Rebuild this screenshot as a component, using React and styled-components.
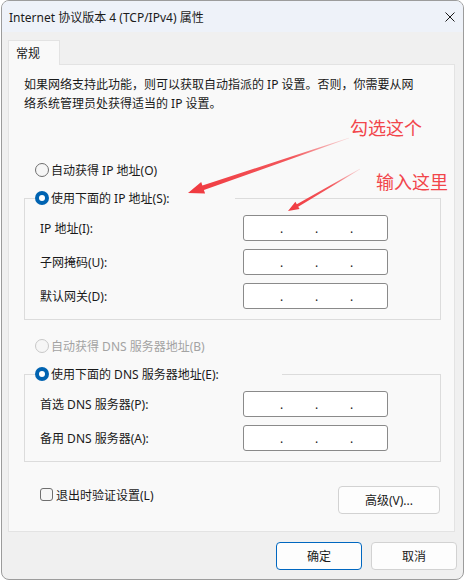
import React from 'react';
import styled, { createGlobalStyle } from 'styled-components';

const GlobalStyle = createGlobalStyle`
  html, body {
    margin: 0;
    padding: 0;
    background: #ffffff;
  }
  body {
    font-family: "Noto Sans", "Noto Sans CJK SC", sans-serif;
    font-size: 12px;
    color: #1a1a1a;
  }
`

const Stage = styled.div`
  position: relative;
  width: 465px;
  height: 581px;
`

const Window = styled.div`
  box-sizing: border-box;
  width: 463px;
  height: 580px;
  margin-left: 1px;
  border: 1px solid #9c9c9c;
  border-radius: 8px;
  overflow: hidden;
  background: #f0f0f0;
  display: flex;
  flex-direction: column;
`

const TitleBar = styled.div`
  height: 31px;
  flex: none;
  background: #eef2f9;
  display: flex;
  align-items: center;
  justify-content: space-between;
  padding: 0 8px 0 7px;
  color: #1b1b1b;
`

const Body = styled.div`
  flex: 1;
  padding: 8px 6px 0 6px;
  display: flex;
  flex-direction: column;
`

const Tab = styled.div`
  position: relative;
  z-index: 1;
  box-sizing: border-box;
  width: 52px;
  height: 25px;
  margin-bottom: -1px;
  padding-left: 7px;
  display: flex;
  align-items: center;
  background: #f9f9f9;
  border: 1px solid #e3e3e3;
  border-bottom: none;
`

const Panel = styled.div`
  margin-right: 2px;
  padding: 10px 13px 17px 15px;
  background: #f9f9f9;
  border: 1px solid #e3e3e3;
  display: flex;
  flex-direction: column;
`

const Intro = styled.p`
  margin: 0;
  line-height: 19px;
`

const RadioRow = styled.label`
  display: flex;
  align-items: center;
  gap: 2px;
  height: 20px;
  margin-top: ${p => p.$top || 0}px;
  margin-left: ${p => (p.$inLegend ? 0 : 11)}px;
  color: ${p => (p.$disabled ? '#a3a3a3' : '#1a1a1a')};
`

const RadioDot = styled.span`
  box-sizing: border-box;
  width: 14px;
  height: 14px;
  border-radius: 50%;
  flex: none;
  background: ${p => (p.$checked ? '#0063b1' : '#f6f6f6')};
  border: ${p =>
    p.$checked ? 'none' : p.$disabled ? '1px solid #c8c8c8' : '1px solid #6f6f6f'};
  display: flex;
  align-items: center;
  justify-content: center;

  &::after {
    content: '';
    width: 6px;
    height: 6px;
    border-radius: 50%;
    background: #ffffff;
    display: ${p => (p.$checked ? 'block' : 'none')};
  }
`

const Group = styled.fieldset`
  margin: 8px 0 0 0;
  padding: 7px 52px 10px 15px;
  border: 1px solid #dcdcdc;
  min-width: 0;
`

const Legend = styled.legend`
  width: ${p => p.$width}px;
  padding: 0;
  margin-left: -5px;
`

const Fields = styled.div`
  display: grid;
  grid-template-columns: 1fr 145px;
  row-gap: 8px;
  align-items: center;
`

const IpField = styled.div`
  box-sizing: border-box;
  width: 145px;
  height: 26px;
  border: 1px solid #8a8a8a;
  border-radius: 3px;
  background: #ffffff;
  display: flex;
  align-items: center;
  padding-left: 36px;
  gap: 32px;
`

const Dot = styled.span`
  width: 3px;
  text-align: center;
  line-height: 12px;
  padding-top: 1px;
`

const OptionsRow = styled.div`
  margin-top: 24px;
  padding: 0 1px 0 16px;
  display: flex;
  justify-content: space-between;
  align-items: flex-start;
`

const CheckLabel = styled.label`
  display: flex;
  align-items: center;
  gap: 3px;
  height: 17px;
`

const CheckBox = styled.span`
  box-sizing: border-box;
  width: 13px;
  height: 13px;
  border: 1px solid #6f6f6f;
  border-radius: 3px;
  background: #f6f6f6;
`

const Button = styled.button`
  box-sizing: border-box;
  width: ${p => p.$width || 86}px;
  height: 28px;
  padding: 0;
  font: inherit;
  color: #1a1a1a;
  background: #fdfdfd;
  border: 1px solid ${p => (p.$primary ? '#0067c0' : '#d2d2d2')};
  border-radius: 4px;
`

const Footer = styled.div`
  margin-top: 10px;
  display: flex;
  justify-content: flex-end;
  gap: 9px;
`

const Note = styled.div`
  position: absolute;
  left: ${p => p.$x}px;
  top: ${p => p.$y}px;
  font-size: 18px;
  line-height: 20px;
  color: #f2464b;
  font-family: "Noto Sans CJK SC", sans-serif;
  white-space: nowrap;
`

const Overlay = styled.svg`
  position: absolute;
  left: 0;
  top: 0;
  pointer-events: none;
`

const arrowPoints = (tx, ty, px, py, head = 16, halfHead = 6, halfShaft = 2.2) => {
  const len = Math.hypot(px - tx, py - ty);
  const ux = (px - tx) / len;
  const uy = (py - ty) / len;
  const nx = -uy;
  const ny = ux;
  const bx = px - ux * head;
  const by = py - uy * head;
  const pts = [
    [tx + nx * 0.3, ty + ny * 0.3],
    [bx + nx * halfShaft, by + ny * halfShaft],
    [bx + nx * halfHead, by + ny * halfHead],
    [px, py],
    [bx - nx * halfHead, by - ny * halfHead],
    [bx - nx * halfShaft, by - ny * halfShaft],
    [tx - nx * 0.3, ty - ny * 0.3],
  ];
  return pts.map(p => p.map(v => v.toFixed(1)).join(',')).join(' ');
};

const Radio = ({ checked, disabled, children, top, inLegend }) => (
  <RadioRow $top={top} $disabled={disabled} $inLegend={inLegend}>
    <RadioDot $checked={checked} $disabled={disabled} />
    <span>{children}</span>
  </RadioRow>
);

const Ip = () => (
  <IpField>
    <Dot>.</Dot>
    <Dot>.</Dot>
    <Dot>.</Dot>
  </IpField>
);

const App = () => {
  return (
    <>
      <GlobalStyle />
      <Stage>
        <Window>
          <TitleBar>
            <span>Internet 协议版本 4 (TCP/IPv4) 属性</span>
            <svg width="10" height="10" viewBox="0 0 10 10">
              <path d="M0.5 0.5 L9.5 9.5 M9.5 0.5 L0.5 9.5" stroke="#1a1a1a" strokeWidth="1" />
            </svg>
          </TitleBar>
          <Body>
            <Tab>常规</Tab>
            <Panel>
              <Intro>
                如果网络支持此功能，则可以获取自动指派的 IP 设置。否则，你需要从网
                <br />
                络系统管理员处获得适当的 IP 设置。
              </Intro>
              <Radio top={47}>自动获得 IP 地址(O)</Radio>
              <Group>
                <Legend $width={200}>
                  <Radio checked inLegend>使用下面的 IP 地址(S):</Radio>
                </Legend>
                <Fields>
                  <span>IP 地址(I):</span>
                  <Ip />
                  <span>子网掩码(U):</span>
                  <Ip />
                  <span>默认网关(D):</span>
                  <Ip />
                </Fields>
              </Group>
              <Radio top={16} disabled>自动获得 DNS 服务器地址(B)</Radio>
              <Group>
                <Legend $width={247}>
                  <Radio checked inLegend>使用下面的 DNS 服务器地址(E):</Radio>
                </Legend>
                <Fields>
                  <span>首选 DNS 服务器(P):</span>
                  <Ip />
                  <span>备用 DNS 服务器(A):</span>
                  <Ip />
                </Fields>
              </Group>
              <OptionsRow>
                <CheckLabel>
                  <CheckBox />
                  <span>退出时验证设置(L)</span>
                </CheckLabel>
                <Button $width={102}>高级(V)...</Button>
              </OptionsRow>
            </Panel>
            <Footer>
              <Button $primary>确定</Button>
              <Button $width={86}>取消</Button>
            </Footer>
          </Body>
        </Window>

        <Overlay width="465" height="581" viewBox="0 0 465 581">
          <defs>
            <linearGradient id="fade1" gradientUnits="userSpaceOnUse" x1="349" y1="138" x2="188" y2="193">
              <stop offset="0" stopColor="#f2464b" stopOpacity="0.15" />
              <stop offset="0.35" stopColor="#f2464b" stopOpacity="0.9" />
              <stop offset="1" stopColor="#f0393f" />
            </linearGradient>
            <linearGradient id="fade2" gradientUnits="userSpaceOnUse" x1="360" y1="169" x2="288" y2="211">
              <stop offset="0" stopColor="#f2464b" stopOpacity="0.15" />
              <stop offset="0.4" stopColor="#f2464b" stopOpacity="0.9" />
              <stop offset="1" stopColor="#f0393f" />
            </linearGradient>
          </defs>
          <polygon points={arrowPoints(349, 138, 188, 193, 16, 6, 2.4)} fill="url(#fade1)" />
          <polygon points={arrowPoints(360, 169, 288, 211, 11, 4.2, 1.4)} fill="url(#fade2)" />
        </Overlay>
        <Note $x={350} $y={117}>勾选这个</Note>
        <Note $x={376} $y={171}>输入这里</Note>
      </Stage>
    </>
  );
};

export default App;
